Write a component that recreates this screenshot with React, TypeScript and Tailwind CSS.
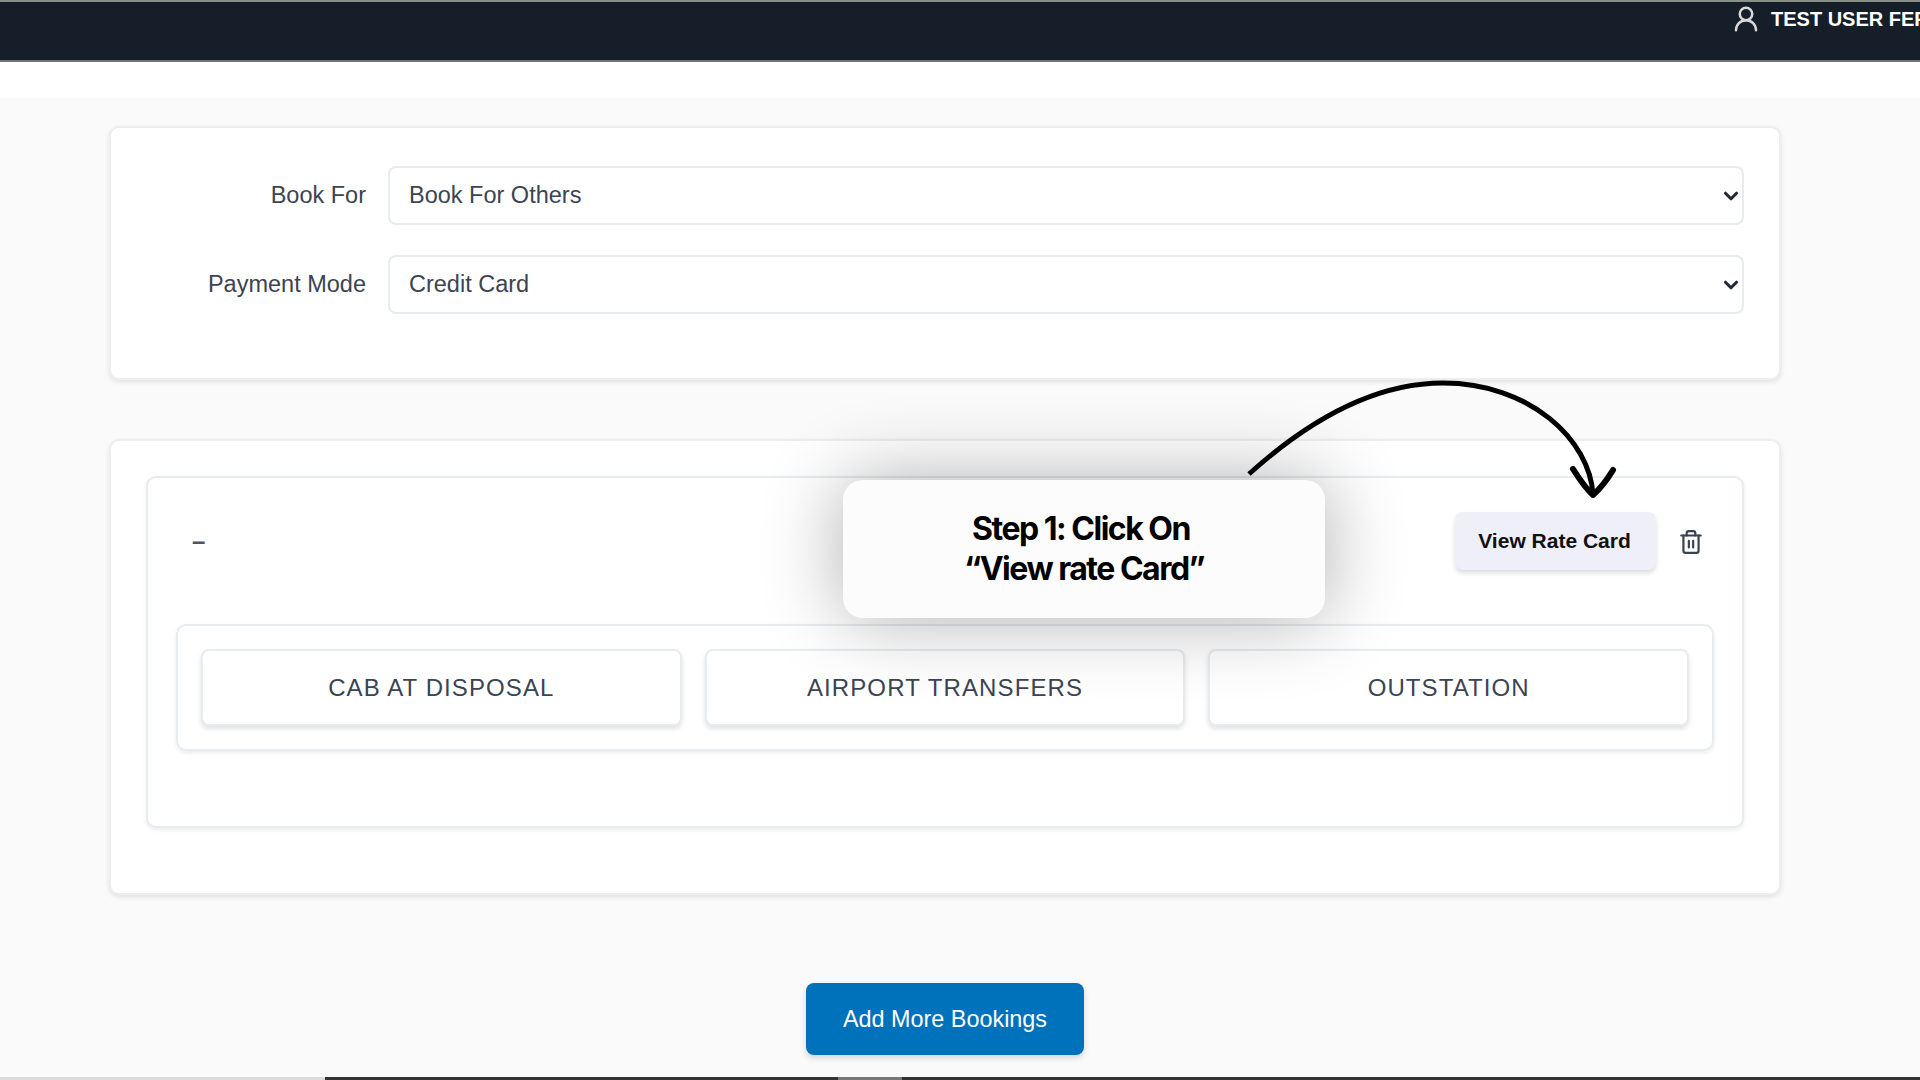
import React from "react";
import { ChevronDown, Trash2, UserRound } from "lucide-react";

const sans = "font-['Liberation_Sans',Arial,sans-serif]";

function Field({ label, value }: { label: string; value: string }) {
  return (
    <div className="flex items-center">
      <div className="w-[277px] shrink-0 pr-[22px] text-right text-[23.5px] text-[#3b4452]">{label}</div>
      <div className="flex h-[59px] flex-1 items-center justify-between rounded-[8px] border-2 border-[#e8ecee] bg-white pl-[19px] pr-[0px] text-[23.5px] text-[#3b4452]">
        <span>{value}</span>
        <ChevronDown className="h-[22px] w-[22px] text-[#1f2937]" strokeWidth={3.4} />
      </div>
    </div>
  );
}

function Tab({ label }: { label: string }) {
  return (
    <div className="flex h-[77px] flex-1 items-center justify-center rounded-[8px] border-2 border-[#e8ecee] bg-white text-[24px] tracking-[1.1px] text-[#3b4452] shadow-[0_3px_5px_rgba(0,0,0,0.12)]">
      {label}
    </div>
  );
}

export default function App() {
  return (
    <div className={`relative h-[1080px] w-[1920px] overflow-hidden bg-[#fafafa] ${sans}`}>
      <header className="h-[62px] overflow-hidden border-t-2 border-b-2 border-t-[#8a9088] border-b-[#6f747a] bg-[#161e29] pl-[1731px] pt-[2px]">
        <div className="flex items-center whitespace-nowrap text-white">
          <UserRound className="h-[30px] w-[30px] shrink-0 text-[#d8d8d8]" strokeWidth={2} />
          <span className="ml-[10px] text-[20px] font-bold">TEST USER FER</span>
        </div>
      </header>
      <div className="h-[36px] bg-white" />

      <main className="pl-[109px] pt-[28px]">
        <section className="flex h-[254px] w-[1672px] flex-col gap-[30px] rounded-[10px] border-2 border-[#eceeef] bg-white pr-[35px] pt-[38px] shadow-[0_2px_5px_rgba(0,0,0,0.1)]">
          <Field label="Book For" value="Book For Others" />
          <Field label="Payment Mode" value="Credit Card" />
        </section>

        <section className="mt-[59px] h-[456px] w-[1672px] rounded-[10px] border-2 border-[#eceeef] bg-white px-[35px] pt-[35px] shadow-[0_2px_5px_rgba(0,0,0,0.1)]">
          <div className="h-[352px] rounded-[10px] border-2 border-[#e8ecee] bg-white px-[28px] shadow-[0_2px_4px_rgba(0,0,0,0.08)]">
            <div className="flex h-[146px] items-start justify-between pt-[34px]">
              <span className="pl-[16px] pt-[17px] text-[24px] font-bold leading-none text-[#4b5563]">–</span>
              <div className="flex items-center gap-[22px] pr-[10px]">
                <button className="h-[58px] w-[201px] rounded-[8px] bg-[#eeeff8] pr-[2px] text-[21px] font-bold text-[#111111] shadow-[0_3px_5px_rgba(0,0,0,0.14)]">
                  View Rate Card
                </button>
                <Trash2 className="h-[26px] w-[26px] translate-y-[1px] text-[#374151]" strokeWidth={2} />
              </div>
            </div>
            <div className="flex h-[127px] items-center gap-[23px] rounded-[10px] border-2 border-[#e8ecee] px-[23px] shadow-[0_2px_4px_rgba(0,0,0,0.08)]">
              <Tab label="CAB AT DISPOSAL" />
              <Tab label="AIRPORT TRANSFERS" />
              <Tab label="OUTSTATION" />
            </div>
          </div>
        </section>

        <div className="mt-[88px] flex w-[1672px] justify-center">
          <button className="h-[72px] w-[278px] rounded-[8px] bg-[#0071bb] pt-[1px] text-[23.4px] text-white shadow-[0_3px_6px_rgba(0,0,0,0.15)]">
            Add More Bookings
          </button>
        </div>
      </main>

      <div className="absolute left-[843px] top-[480px] flex h-[138px] w-[482px] flex-col items-center justify-center rounded-[20px] bg-[#fcfcfc] font-['Inter',sans-serif] text-[32px] font-bold leading-[40px] tracking-[-1.5px] text-black shadow-[0_0_80px_rgba(0,0,0,0.32)]">
        <span className="-translate-x-[3px]">Step 1: Click On</span>
        <span>“View rate Card”</span>
      </div>

      <svg className="absolute left-0 top-0 h-[1080px] w-[1920px]" viewBox="0 0 1920 1080" fill="none">
        <path d="M1249 474C1320 410 1385 383 1443 383C1530 383 1590 440 1593 495" stroke="#000" strokeWidth="5" />
        <path d="M1573 469C1580 480 1586 489 1593 495C1601 488 1607 480 1613 470" stroke="#000" strokeWidth="6" strokeLinecap="round" strokeLinejoin="round" />
      </svg>

      <div className="absolute bottom-0 left-0 flex h-[3px] w-full">
        <div className="w-[325px] bg-[#dcdcdc]" />
        <div className="w-[513px] bg-[#333333]" />
        <div className="w-[64px] bg-[#777777]" />
        <div className="flex-1 bg-[#333333]" />
      </div>
    </div>
  );
}
